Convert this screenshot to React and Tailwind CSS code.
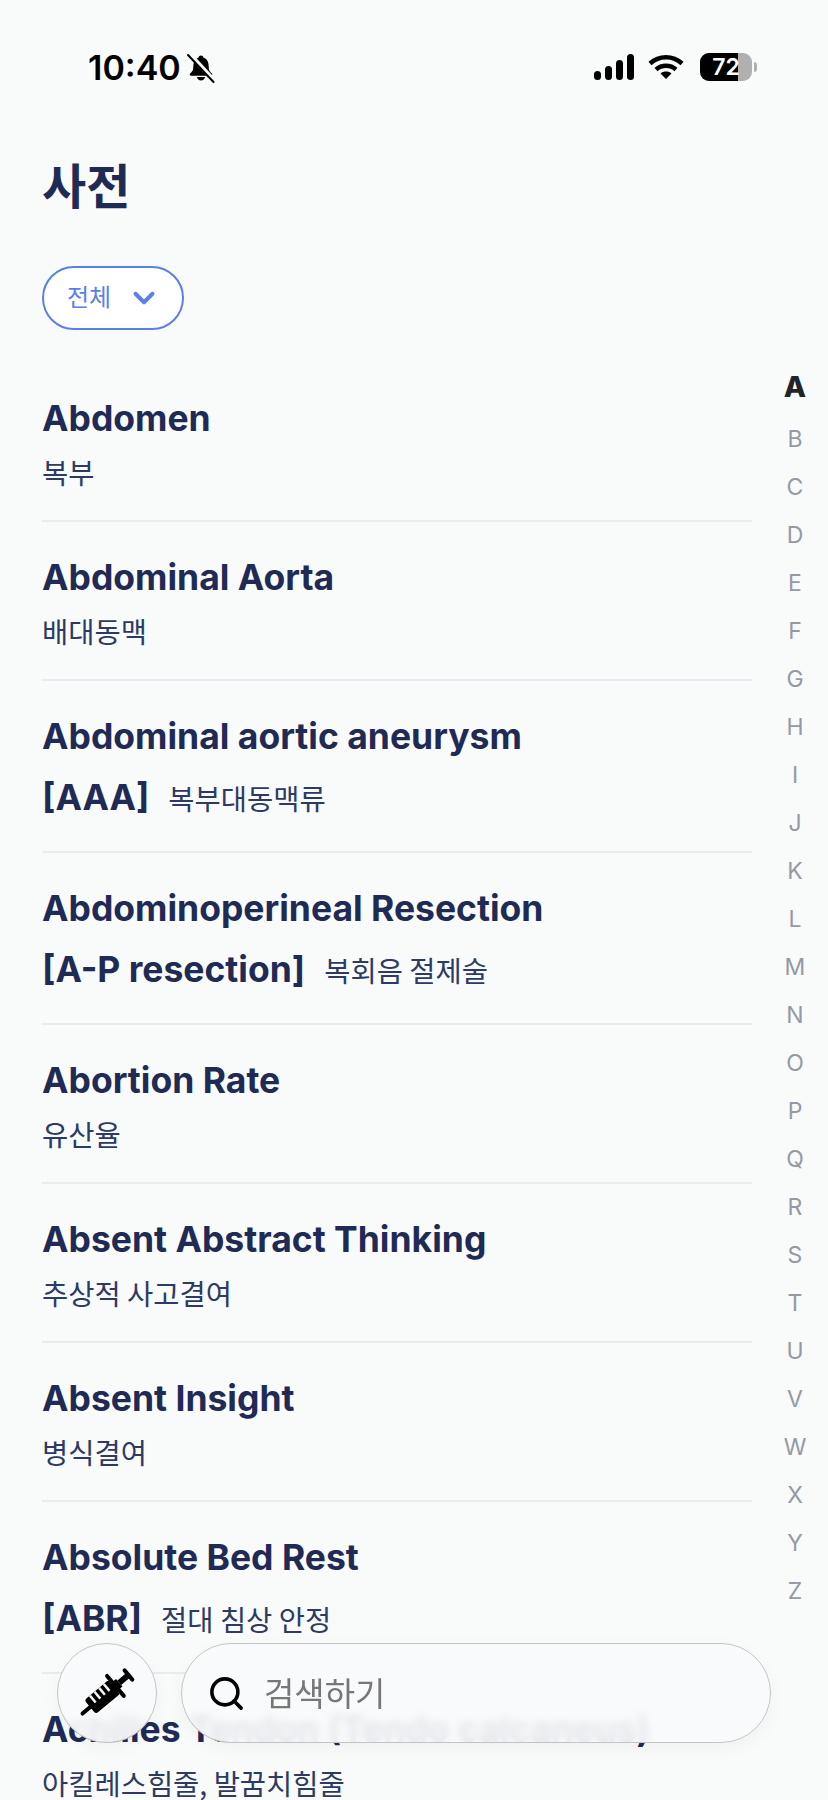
import React from 'react';
import { ChevronDown, Search } from 'lucide-react';

const terms = [
  { title: 'Abdomen', meaning: '복부' },
  { title: 'Abdominal Aorta', meaning: '배대동맥' },
  { title: 'Abdominal aortic aneurysm', abbr: '[AAA]', meaning: '복부대동맥류' },
  { title: 'Abdominoperineal Resection', abbr: '[A-P resection]', meaning: '복회음 절제술' },
  { title: 'Abortion Rate', meaning: '유산율' },
  { title: 'Absent Abstract Thinking', meaning: '추상적 사고결여' },
  { title: 'Absent Insight', meaning: '병식결여' },
  { title: 'Absolute Bed Rest', abbr: '[ABR]', meaning: '절대 침상 안정' },
  { title: 'Achilles Tendon (Tendo calcaneus)', meaning: '아킬레스힘줄, 발꿈치힘줄' },
];

const letters = 'ABCDEFGHIJKLMNOPQRSTUVWXYZ'.split('');

const BellOff = () => (
  <svg width="28" height="30" viewBox="0 0 28 30" fill="none">
    <path d="M14 2.500c-1.300 0-2.300.900-2.400 2.100C8.500 5.500 6.800 8.100 6.500 11.300l-.4 4.500c-.2 2-1.400 3.300-3 4.800-.8.900-.3 2.200 1 2.200h19.800c1.300 0 1.800-1.300 1-2.200-1.600-1.500-2.800-2.800-3-4.800l-.4-4.500c-.3-3.200-2-5.800-5.100-6.700C16.300 3.400 15.300 2.500 14 2.500z" fill="#000" />
    <path d="M10 24h8c-.3 2.200-1.900 3.500-4 3.500S10.300 26.200 10 24z" fill="#000" />
    <path d="M2.500 1l25 27" stroke="#f9fafa" strokeWidth="4.500" />
    <path d="M1 2l25.500 27" stroke="#000" strokeWidth="2" strokeLinecap="round" />
  </svg>
);

const Signal = () => (
  <svg width="40" height="26" viewBox="0 0 40 26" fill="#000">
    <rect x="0" y="17" width="7" height="9" rx="3.500" />
    <rect x="11" y="12" width="7" height="14" rx="3.500" />
    <rect x="22" y="6" width="7" height="20" rx="3.500" />
    <rect x="33" y="0" width="7" height="26" rx="3.500" />
  </svg>
);

const Wifi = () => (
  <svg width="36" height="26" viewBox="0 0 36 26" fill="none" stroke="#000" strokeWidth="4.500">
    <path d="M2 9.500c9-8.400 23-8.400 32 0" />
    <path d="M8 15.500c5.700-5 14.300-5 20 0" />
    <path d="M18 25l-5.500-5.500c3-2.600 8-2.600 11 0z" fill="#000" stroke="none" />
  </svg>
);

const Battery = () => (
  <div className="flex items-center gap-[2px]">
    <div className="relative flex h-[28px] w-[52px] items-center justify-center overflow-hidden rounded-[9px] bg-[#b0b0b0]">
      <div className="absolute inset-y-0 left-0 w-[38px] bg-black" />
      <span className="relative font-['Inter',sans-serif] text-[23px] font-semibold leading-none text-white">72</span>
    </div>
    <div className="h-[10px] w-[3px] rounded-r-full bg-[#b0b0b0]" />
  </div>
);

const Syringe = () => (
  <svg width="60" height="60" viewBox="0 0 60 60">
    <g transform="rotate(-40 30 30)" fill="#000">
      <rect x="-4" y="28" width="16" height="4" rx="2" />
      <rect x="8" y="21" width="32" height="18" rx="3" />
      <rect x="38" y="25" width="8" height="10" />
      <rect x="39" y="15" width="4" height="30" rx="2" />
      <rect x="46" y="27" width="12" height="6" />
      <rect x="56" y="22" width="4" height="16" rx="2" />
      <g fill="#f4f5f7">
        <rect x="14" y="21" width="2.500" height="9" />
        <rect x="20" y="21" width="2.500" height="9" />
        <rect x="26" y="21" width="2.500" height="9" />
        <rect x="32" y="21" width="2.500" height="9" />
      </g>
    </g>
  </svg>
);

const StatusBar = () => (
  <div className="flex h-[100px] items-start justify-between pl-[88px] pr-[71px] pt-[51px]">
    <div className="flex items-center gap-[6px]">
      <span className="font-['Inter',sans-serif] text-[34px] font-semibold leading-[33px] text-black">10:40</span>
      <BellOff />
    </div>
    <div className="flex items-center pt-[2px]">
      <Signal />
      <div className="ml-[14px] mr-[16px]">
        <Wifi />
      </div>
      <Battery />
    </div>
  </div>
);

const TermRow = ({ term }) => (
  <div className={term.abbr ? 'border-b-2 border-[#e9ebf0] pb-[29px] pt-[32px]' : 'border-b-2 border-[#e9ebf0] pb-[24px] pt-[32px]'}>
    <div className="font-['Inter','Noto_Sans_CJK_KR',sans-serif] text-[35.500px] font-bold leading-[48px] text-[#1f2b54] whitespace-nowrap">
      {term.title}
    </div>
    {term.abbr ? (
      <div className="mt-[13px] flex items-center gap-[19px] leading-[48px]">
        <span className="font-['Inter',sans-serif] text-[35.500px] font-bold text-[#1f2b54]">{term.abbr}</span>
        <span className="font-['Noto_Sans_CJK_KR',sans-serif] text-[28.500px] text-[#2d3a63]">{term.meaning}</span>
      </div>
    ) : (
      <div className="mt-[5px] font-['Noto_Sans_CJK_KR',sans-serif] text-[28.500px] leading-[48px] text-[#2d3a63]">
        {term.meaning}
      </div>
    )}
  </div>
);

export default function App() {
  return (
    <div className="relative h-[1800px] w-[828px] overflow-hidden bg-[#f9fafa]">
      <StatusBar />

      <h1 className="pl-[42px] pt-[48px] font-['Noto_Sans_CJK_KR',sans-serif] text-[48px] font-bold leading-[70px] text-[#1f2b54]">
        사전
      </h1>

      <div className="pl-[42px] pt-[48px]">
        <button className="flex h-[64px] w-[142px] items-center justify-between rounded-full border-2 border-[#5b7fe8] bg-white pl-[23px] pr-[21px]">
          <span className="font-['Noto_Sans_CJK_KR',sans-serif] text-[24px] leading-[30px] pb-[5px] text-[#5b7fe8]">전체</span>
          <ChevronDown size={34} strokeWidth={2.800} color="#5b7fe8" />
        </button>
      </div>

      <div className="relative mt-[33px]">
        <div className="ml-[42px] w-[710px]">
          {terms.map((term) => (
            <TermRow key={term.title} term={term} />
          ))}
        </div>

        {/* side index */}
        <div className="absolute right-0 top-[0px] flex w-[66px] flex-col items-center font-['Inter',sans-serif]">
          {letters.map((l, i) => (
            <div
              key={l}
              className={i === 0 ? 'h-[52px] text-[29px] font-extrabold leading-[48px] text-[#22242a]' : 'h-[48px] text-[23px] leading-[48px] text-[#9599a6]'}
            >
              {l}
            </div>
          ))}
        </div>
      </div>

      {/* floating bar */}
      <div className="absolute left-[57px] top-[1643px] flex items-center gap-[24px]">
        <div className="flex h-[100px] w-[100px] items-center justify-center rounded-full border border-[#c4c4c4] bg-[#f8f9fb]/90 shadow-[0_6px_20px_rgba(0,0,0,0.04)] backdrop-blur-[4px]">
          <Syringe />
        </div>
        <div className="flex h-[100px] w-[590px] items-center gap-[18px] rounded-full border border-[#c4c4c4] bg-[#f8f9fb]/90 pl-[25px] shadow-[0_6px_20px_rgba(0,0,0,0.04)] backdrop-blur-[4px]">
          <Search size={39} strokeWidth={2.200} color="#000" />
          <span className="font-['Noto_Sans_CJK_KR',sans-serif] text-[33px] text-[#777777]">검색하기</span>
        </div>
      </div>
    </div>
  );
}
